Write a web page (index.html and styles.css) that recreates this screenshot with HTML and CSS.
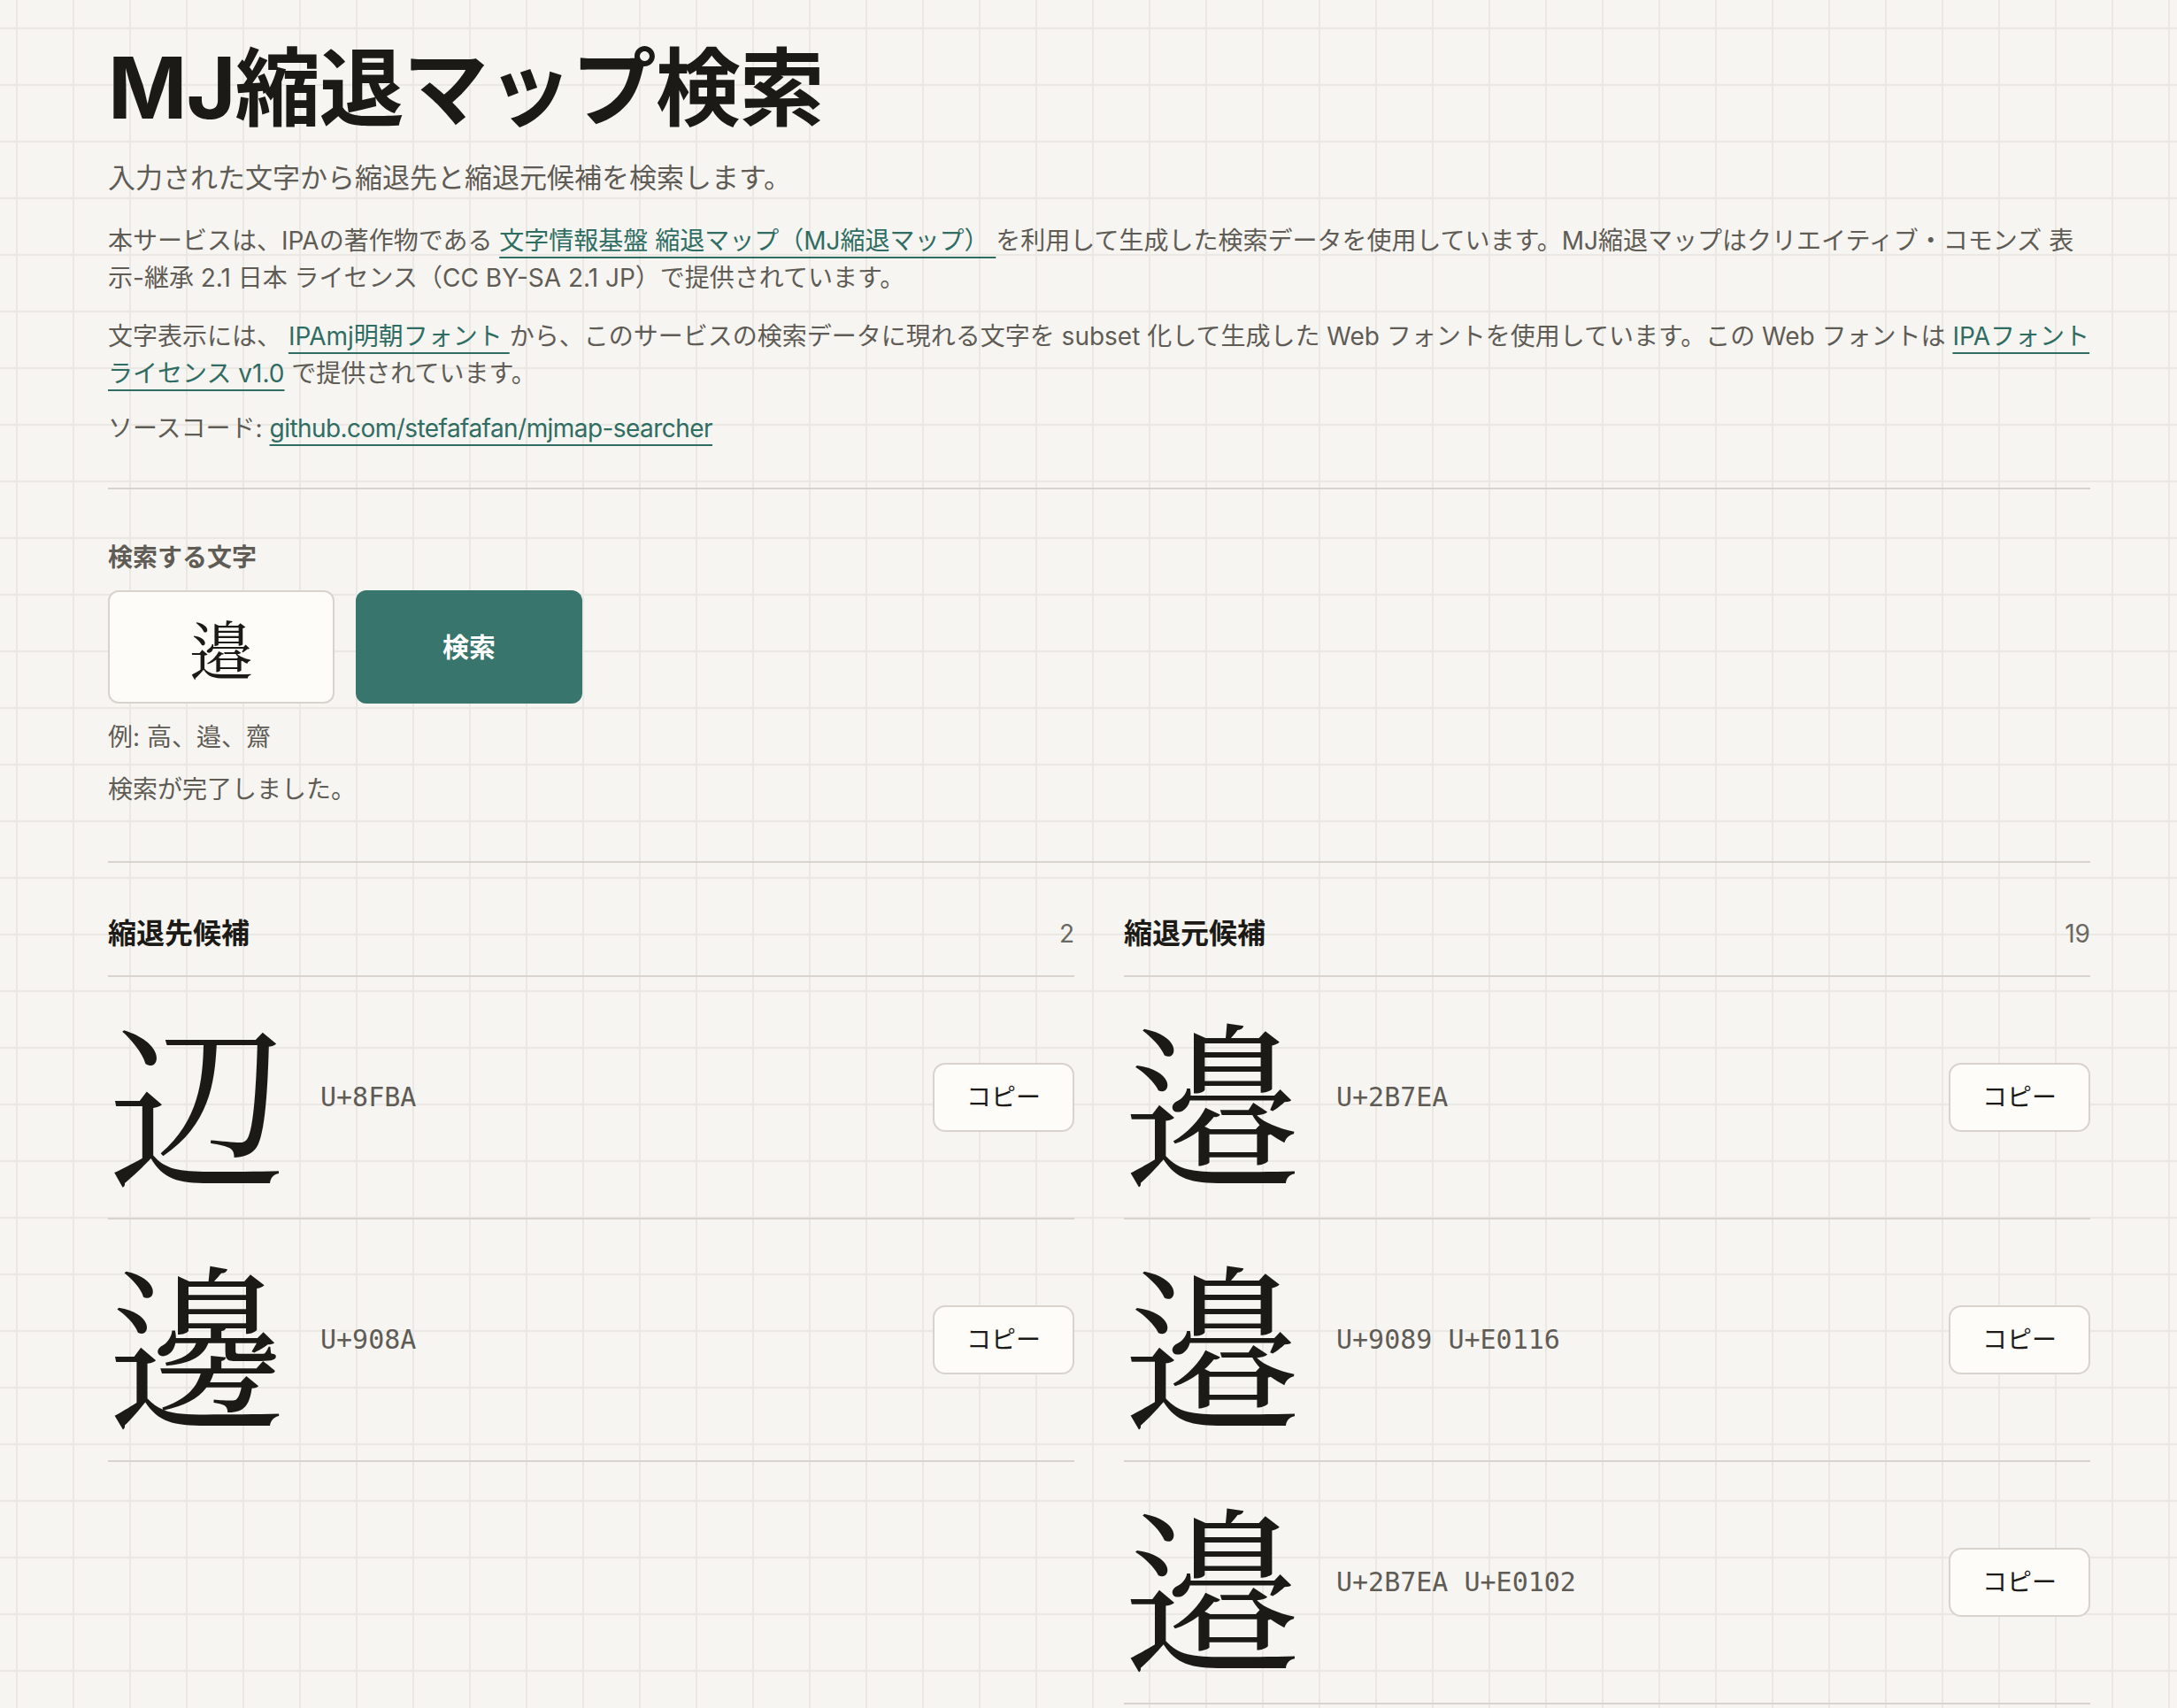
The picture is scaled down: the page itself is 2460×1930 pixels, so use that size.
FILE: index.html
```html
<!doctype html>
<html lang="ja">

<head>
  <meta charset="UTF-8">
  <title>MJ縮退マップ検索</title>
  <link rel="stylesheet" href="styles.css">
</head>

<body>
  <main class="page">
    <h1 class="title">MJ縮退マップ検索</h1>
    <p class="lead">入力された文字から縮退先と縮退元候補を検索します。</p>

    <p class="note">本サービスは、IPAの著作物である <a href="#">文字情報基盤 縮退マップ（MJ縮退マップ） </a> を利用して生成した検索データを使用しています。MJ縮退マップはクリエイティブ・コモンズ 表示-継承 2.1 日本 ライセンス（CC BY-SA 2.1 JP）で提供されています。</p>

    <p class="note">文字表示には、 <a href="#">IPAmj明朝フォント </a> から、このサービスの検索データに現れる文字を subset 化して生成した Web フォントを使用しています。この Web フォントは <a href="#">IPAフォントライセンス v1.0</a> で提供されています。</p>

    <p class="note source">ソースコード: <a href="#">github.com/stefafafan/mjmap-searcher</a></p>

    <hr class="rule">

    <form class="search">
      <label class="search-label" for="q">検索する文字</label>
      <div class="search-row">
        <input id="q" class="search-input" type="text" value="邉">
        <button class="search-button" type="submit">検索</button>
      </div>
      <p class="hint">例: 高、邉、齋</p>
      <p class="status">検索が完了しました。</p>
    </form>

    <hr class="rule rule-results">

    <div class="results">
      <section class="column">
        <div class="column-head">
          <h2 class="column-title">縮退先候補</h2>
          <span class="count">2</span>
        </div>
        <ul class="glyph-list">
          <li class="glyph-row">
            <span class="glyph">辺</span>
            <span class="code">U+8FBA</span>
            <button class="copy" type="button">コピー</button>
          </li>
          <li class="glyph-row">
            <span class="glyph">邊</span>
            <span class="code">U+908A</span>
            <button class="copy" type="button">コピー</button>
          </li>
        </ul>
      </section>

      <section class="column">
        <div class="column-head">
          <h2 class="column-title">縮退元候補</h2>
          <span class="count">19</span>
        </div>
        <ul class="glyph-list">
          <!-- U+2B7EA is not in the installed fonts, 邉 stands in for it -->
          <li class="glyph-row">
            <span class="glyph">邉</span>
            <span class="code">U+2B7EA</span>
            <button class="copy" type="button">コピー</button>
          </li>
          <li class="glyph-row">
            <span class="glyph">&#x9089;&#xE0116;</span>
            <span class="code">U+9089 U+E0116</span>
            <button class="copy" type="button">コピー</button>
          </li>
          <li class="glyph-row">
            <span class="glyph">邉</span>
            <span class="code">U+2B7EA U+E0102</span>
            <button class="copy" type="button">コピー</button>
          </li>
        </ul>
      </section>
    </div>
  </main>
</body>

</html>
```

FILE: styles.css
```css
body {
  margin: 0;
  color: #5f5b55;
  font: normal 28px/1.5 Inter, "Noto Sans CJK JP", sans-serif;
  background-color: #f6f5f1;
  background-image:
    linear-gradient(to right, #ebe8e3 2px, transparent 2px),
    linear-gradient(to bottom, #ebe8e3 2px, transparent 2px);
  background-size: 64px 64px;
  background-position: 18px 31px;
}

.page {
  width: 2240px;
  margin: 0 0 0 122px;
  padding-top: 42px;
}

.title {
  margin: 0;
  color: #1b1a17;
  font-size: 96px;
  font-weight: 700;
  line-height: 1.2;
  letter-spacing: -0.01em;
}

.lead {
  margin: 21px 0 0;
  font-size: 31px;
}

.note {
  margin: 26px 0 0;
}

.note + .note {
  margin-top: 24px;
}

.note.source {
  margin-top: 20px;
}

a {
  color: #2f6d63;
  text-decoration: underline;
  text-decoration-thickness: 2px;
  text-underline-offset: 8px;
}

.source a {
  letter-spacing: -0.02em;
}

.rule {
  height: 2px;
  margin: 46px 0 0;
  border: 0;
  background: #d8d3cd;
}

/* search form */
.search {
  margin-top: 56px;
}

.search-label {
  display: block;
  font-weight: 700;
}

.search-row {
  display: flex;
  gap: 24px;
  margin-top: 16px;
}

.search-input {
  box-sizing: border-box;
  width: 256px;
  height: 128px;
  padding: 0;
  border: 2px solid #d8d3cd;
  border-radius: 12px;
  background: #fdfcf9;
  color: #1b1a17;
  font: 72px/1 "IPAmjMincho", "Noto Serif CJK JP", "Noto Sans CJK JP", serif;
  text-align: center;
}

.search-button {
  width: 256px;
  height: 128px;
  border: 0;
  border-radius: 12px;
  background: #37756d;
  color: #fff;
  font: 700 30px/1 Inter, "Noto Sans CJK JP", sans-serif;
}

.hint {
  margin: 17px 0 0;
}

.status {
  margin: 17px 0 0;
}

.rule-results {
  margin-top: 60px;
}

/* results */
.results {
  display: grid;
  grid-template-columns: 1fr 1fr;
  column-gap: 56px;
  margin-top: 56px;
}

.column-head {
  display: flex;
  justify-content: space-between;
  align-items: center;
  padding-bottom: 23px;
  border-bottom: 2px solid #d8d3cd;
}

.column-title {
  margin: 0;
  color: #1b1a17;
  font-size: 32px;
  font-weight: 700;
  line-height: 1.5;
}

.count {
  color: #6b6761;
}

.glyph-list {
  margin: 0;
  padding: 0;
  list-style: none;
}

.glyph-row {
  display: flex;
  align-items: center;
  gap: 40px;
  padding: 36px 0;
  border-bottom: 2px solid #d8d3cd;
}

.glyph {
  width: 200px;
  color: #1b1a17;
  font: 200px/1 "IPAmjMincho", "Noto Serif CJK JP", "Noto Sans CJK JP", serif;
}

.code {
  flex: 1;
  color: #5f5b55;
  font: 30px/1 "DejaVu Sans Mono", monospace;
}

.copy {
  padding: 16px 36px;
  border: 2px solid #d8d3cd;
  border-radius: 14px;
  background: #fdfcf9;
  color: #1b1a17;
  font: 28px/1.5 Inter, "Noto Sans CJK JP", sans-serif;
}
```
